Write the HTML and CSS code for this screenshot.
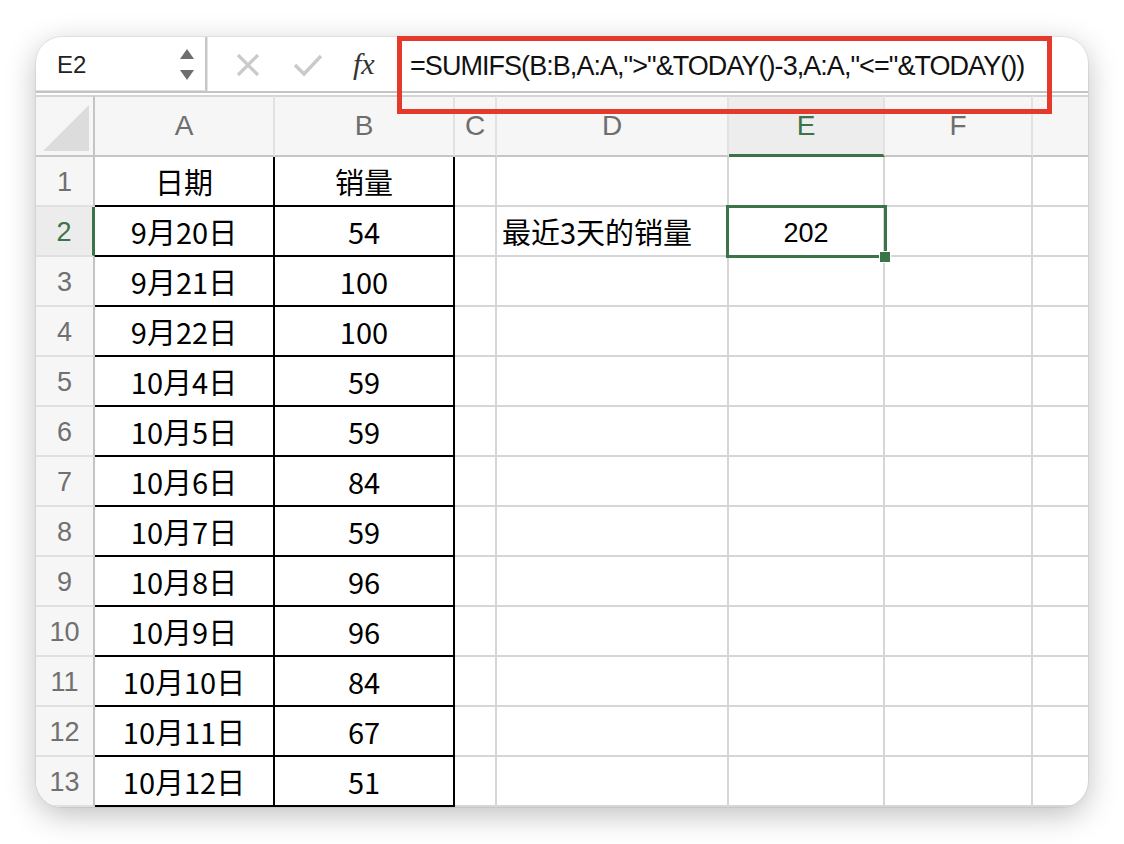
FILE: index.html
```html
<!DOCTYPE html>
<html lang="zh">
<head>
<meta charset="utf-8">
<title>SUMIFS</title>
<link rel="stylesheet" href="styles.css">
</head>
<body>
<div class="stage">
  <div class="window">
    <div class="fbar">
      <div class="namebox">
        <span class="nb-text">E2</span>
        <span class="spin">
          <svg width="16" height="34" viewBox="0 0 16 34"><polygon points="8,1 15,11 1,11" fill="#6e6e6e"/><polygon points="1,22 15,22 8,32" fill="#6e6e6e"/></svg>
        </span>
      </div>
      <div class="tools">
        <svg class="ico-x" width="24" height="24" viewBox="0 0 24 24"><path d="M2 2 L22 22 M22 2 L2 22" stroke="#cacaca" stroke-width="3.2" fill="none"/></svg>
        <svg class="ico-ok" width="30" height="24" viewBox="0 0 30 24"><path d="M2 12 L11 21 L28 3" stroke="#cacaca" stroke-width="3.4" fill="none"/></svg>
        <span class="fx">fx</span>
      </div>
      <div class="formula">=SUMIFS(B:B,A:A,"&gt;"&amp;TODAY()-3,A:A,"&lt;="&amp;TODAY())</div>
    </div>
    <div class="sheet">
      <div class="h corner"><svg width="48" height="48" viewBox="0 0 48 48"><polygon points="47,1 47,47 1,47" fill="#dcdcdc"/></svg></div>
      <div class="h col">A</div>
      <div class="h col">B</div>
      <div class="h col">C</div>
      <div class="h col">D</div>
      <div class="h col sel-col">E</div>
      <div class="h col">F</div>
      <div class="h col last"></div>

      <div class="rh">1</div><div class="c ta">日期</div><div class="c tb">销量</div><div class="c"></div><div class="c"></div><div class="c"></div><div class="c"></div><div class="c last"></div>
      <div class="rh sel-row">2</div><div class="c ta">9月20日</div><div class="c tb">54</div><div class="c"></div><div class="c left">最近3天的销量</div><div class="c active">202<span class="sel"></span><span class="handle"></span></div><div class="c"></div><div class="c last"></div>
      <div class="rh">3</div><div class="c ta">9月21日</div><div class="c tb">100</div><div class="c"></div><div class="c"></div><div class="c"></div><div class="c"></div><div class="c last"></div>
      <div class="rh">4</div><div class="c ta">9月22日</div><div class="c tb">100</div><div class="c"></div><div class="c"></div><div class="c"></div><div class="c"></div><div class="c last"></div>
      <div class="rh">5</div><div class="c ta">10月4日</div><div class="c tb">59</div><div class="c"></div><div class="c"></div><div class="c"></div><div class="c"></div><div class="c last"></div>
      <div class="rh">6</div><div class="c ta">10月5日</div><div class="c tb">59</div><div class="c"></div><div class="c"></div><div class="c"></div><div class="c"></div><div class="c last"></div>
      <div class="rh">7</div><div class="c ta">10月6日</div><div class="c tb">84</div><div class="c"></div><div class="c"></div><div class="c"></div><div class="c"></div><div class="c last"></div>
      <div class="rh">8</div><div class="c ta">10月7日</div><div class="c tb">59</div><div class="c"></div><div class="c"></div><div class="c"></div><div class="c"></div><div class="c last"></div>
      <div class="rh">9</div><div class="c ta">10月8日</div><div class="c tb">96</div><div class="c"></div><div class="c"></div><div class="c"></div><div class="c"></div><div class="c last"></div>
      <div class="rh">10</div><div class="c ta">10月9日</div><div class="c tb">96</div><div class="c"></div><div class="c"></div><div class="c"></div><div class="c"></div><div class="c last"></div>
      <div class="rh">11</div><div class="c ta">10月10日</div><div class="c tb">84</div><div class="c"></div><div class="c"></div><div class="c"></div><div class="c"></div><div class="c last"></div>
      <div class="rh">12</div><div class="c ta">10月11日</div><div class="c tb">67</div><div class="c"></div><div class="c"></div><div class="c"></div><div class="c"></div><div class="c last"></div>
      <div class="rh">13</div><div class="c ta">10月12日</div><div class="c tb">51</div><div class="c"></div><div class="c"></div><div class="c"></div><div class="c"></div><div class="c last"></div>
    </div>
  </div>
  <div class="redbox"></div>
</div>
</body>
</html>
```

FILE: styles.css
```css
* { box-sizing: border-box; }
html, body { margin: 0; padding: 0; background: #ffffff; }
body { font-family: "Liberation Sans", Arial, sans-serif; }

.stage {
  position: relative;
  width: 1124px;
  height: 844px;
  padding: 37px 36px 0 36px;
}

.window {
  width: 1052px;
  height: 770px;
  border-radius: 26px;
  overflow: hidden;
  background: #ffffff;
  box-shadow: 0 0 0 1px rgba(0,0,0,0.06), 0 8px 30px rgba(0,0,0,0.25);
}

/* formula bar */
.fbar {
  height: 56px;
  display: flex;
  align-items: stretch;
  border-bottom: 2px solid #c4c4c4;
}
.namebox {
  width: 171px;
  display: flex;
  align-items: center;
  justify-content: space-between;
  padding: 2px 10px 0 21px;
  border-right: 2px solid #c6c6c6;
  border-bottom: 1px solid #dedede;
}
.nb-text { font-size: 24px; color: #222; }
.spin { display: flex; align-items: center; }
.tools {
  width: 203px;
  display: flex;
  align-items: center;
  padding-left: 28px;
  padding-top: 2px;
  border-left: 1px solid #e4e4e4;
}
.ico-x { margin-right: 33px; }
.ico-ok { margin-right: 30px; }
.fx {
  font-family: "Liberation Serif", "Times New Roman", serif;
  font-style: italic;
  font-size: 30px;
  color: #333;
  margin-top: -2px;
}
.formula {
  display: flex;
  align-items: center;
  padding-top: 5px;
  font-size: 27px;
  letter-spacing: -0.95px;
  color: #111;
  white-space: nowrap;
}

/* sheet */
.sheet {
  margin-top: 2px;
  display: grid;
  grid-template-columns: 59px 180px 180px 42px 232px 156px 148px 55px;
  grid-template-rows: 62px;
  grid-auto-rows: 50px;
}
.h {
  background: #f6f6f6;
  border-top: 2px solid #d4d4d4;
  border-bottom: 2px solid #c6c6c6;
  border-right: 2px solid #e2e2e2;
  display: flex;
  align-items: center;
  justify-content: center;
  font-size: 28px;
  color: #6e6e6e;
}
.h.corner {
  border-right: 2px solid #c4c4c4;
  justify-content: flex-end;
  align-items: flex-end;
  padding: 0 3px 3px 0;
}
.h.last { border-right: none; }
.h.sel-col {
  background: #ededed;
  color: #3a7447;
  border-bottom: 3px solid #3a7447;
}
.rh {
  background: #f6f6f6;
  border-right: 2px solid #c4c4c4;
  border-bottom: 2px solid #e0e0e0;
  display: flex;
  align-items: center;
  justify-content: center;
  padding-top: 3px;
  font-size: 27px;
  color: #707070;
}
.rh.sel-row {
  background: #ececec;
  color: #3a7447;
  border-right: 3px solid #3a7447;
}
.c {
  border-right: 2px solid #d6d6d6;
  border-bottom: 2px solid #d6d6d6;
  display: flex;
  align-items: center;
  justify-content: center;
  font-family: "Noto Sans CJK SC", "Liberation Sans", sans-serif;
  font-size: 29px;
  color: #000;
  white-space: nowrap;
}
.c.last { border-right: none; }
.c.left { justify-content: flex-start; padding-left: 5px; }
.c.ta, .c.tb {
  border-right-color: #000;
  border-bottom-color: #000;
}
.c.active {
  position: relative;
  z-index: 2;
  padding-top: 5px;
  font-family: "Liberation Sans", Arial, sans-serif;
  font-size: 27px;
}
.sel {
  position: absolute;
  left: -3px;
  top: -2px;
  right: -4px;
  bottom: -3px;
  border: 3px solid #3a7447;
}
.handle {
  position: absolute;
  right: -8px;
  bottom: -8px;
  width: 12px;
  height: 12px;
  background: #3a7447;
  border: 1px solid #ffffff;
}

/* red annotation */
.redbox {
  position: absolute;
  left: 397px;
  top: 36px;
  width: 655px;
  height: 78px;
  border: 5px solid #e5392b;
}
```
